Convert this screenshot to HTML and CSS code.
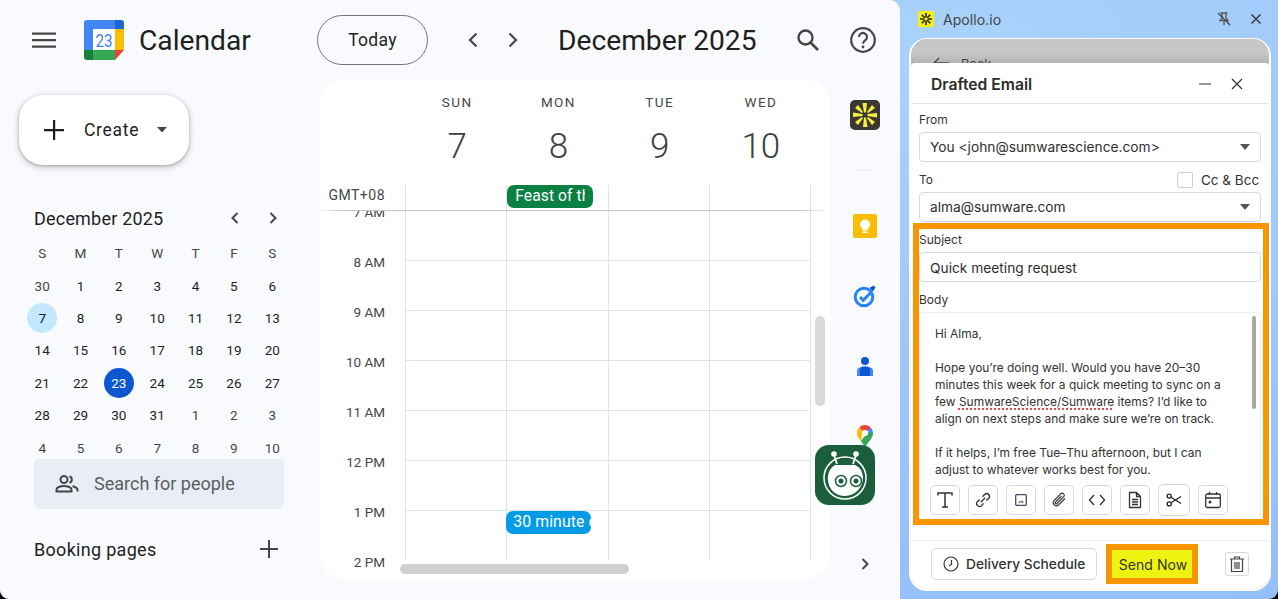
FILE: index.html
```html
<!DOCTYPE html>
<html lang="en">
<head>
<meta charset="utf-8">
<title>Calendar with Apollo.io</title>
<link rel="stylesheet" href="styles.css">
</head>
<body>
<div class="window">
  <div class="calendar">
    <header class="top">
      <div class="brand">
        <svg class="menu" width="24" height="24" viewBox="0 0 24 24"><path d="M0 4.500h24v2.200H0zM0 11h24v2.200H0zM0 17.500h24v2.200H0z" fill="#444746"/></svg>
        <svg class="logo" width="40" height="40" viewBox="0 0 40 40">
          <path d="M3 0h28v9H9v21H0V3a3 3 0 0 1 3-3z" fill="#4285f4"/>
          <path d="M31 0h6a3 3 0 0 1 3 3v6h-9z" fill="#1967d2"/>
          <path d="M31 9h9v21h-9z" fill="#fbbc04"/>
          <path d="M9 30h22v10H9z" fill="#34a853"/>
          <path d="M0 30h9v10H3a3 3 0 0 1-3-3z" fill="#188038"/>
          <path d="M31 30h9l-9 10z" fill="#ea4335"/>
          <rect x="9" y="9" width="22" height="21" fill="#fff"/>
          <text x="20" y="27" class="logo-num" textLength="17" lengthAdjust="spacingAndGlyphs">23</text>
        </svg>
        <span class="brand-name">Calendar</span>
      </div>
      <button class="today">Today</button>
      <svg class="nav-a" width="12" height="18" viewBox="0 0 12 18"><path d="M9.500 2.500 3 9l6.500 6.500" class="chev"/></svg>
      <svg class="nav-b" width="12" height="18" viewBox="0 0 12 18"><path d="M2.500 2.500 9 9l-6.500 6.500" class="chev"/></svg>
      <h1 class="month-title">December 2025</h1>
      <svg class="ic-search" width="26" height="26" viewBox="0 0 26 26"><circle cx="10.500" cy="10.500" r="7" fill="none" stroke="#444746" stroke-width="2.400"/><path d="m15.500 15.500 7.500 7.500" stroke="#444746" stroke-width="2.600"/></svg>
      <svg class="ic-help" width="28" height="28" viewBox="0 0 28 28"><circle cx="14" cy="14" r="11.800" fill="none" stroke="#444746" stroke-width="2.200"/><path d="M10 11a4 4 0 1 1 6.400 3.200c-1.500 1.100-2.400 1.800-2.400 3.500" fill="none" stroke="#444746" stroke-width="2.200"/><circle cx="14" cy="21" r="1.400" fill="#444746"/></svg>
    </header>
    <div class="main">
      <aside class="sidebar">
        <button class="create">
          <svg width="24" height="24" viewBox="0 0 24 24"><path d="M11 2h2.200v9H22v2.200h-8.800V22H11v-8.800H2V11h9z" fill="#1f1f1f"/></svg>
          <span class="create-label">Create</span>
          <svg width="12" height="6" viewBox="0 0 12 6"><path d="M1 0h10L6 5.500z" fill="#444746"/></svg>
        </button>
        <div class="mini-head">
          <span class="mini-title">December 2025</span>
          <svg class="mini-prev" width="10" height="14" viewBox="0 0 10 14"><path d="M7.500 2 2.500 7l5 5" class="chev-s"/></svg>
          <svg class="mini-next" width="10" height="14" viewBox="0 0 10 14"><path d="M2.500 2l5 5-5 5" class="chev-s"/></svg>
        </div>
        <div class="mini-grid">
          <span class="wd">S</span><span class="wd">M</span><span class="wd">T</span><span class="wd">W</span><span class="wd">T</span><span class="wd">F</span><span class="wd">S</span>
          <span class="dim">30</span><span>1</span><span>2</span><span>3</span><span>4</span><span>5</span><span>6</span>
          <span><b class="sel">7</b></span><span>8</span><span>9</span><span>10</span><span>11</span><span>12</span><span>13</span>
          <span>14</span><span>15</span><span>16</span><span>17</span><span>18</span><span>19</span><span>20</span>
          <span>21</span><span>22</span><span><b class="now">23</b></span><span>24</span><span>25</span><span>26</span><span>27</span>
          <span>28</span><span>29</span><span>30</span><span>31</span><span class="dim">1</span><span class="dim">2</span><span class="dim">3</span>
          <span class="dim">4</span><span class="dim">5</span><span class="dim">6</span><span class="dim">7</span><span class="dim">8</span><span class="dim">9</span><span class="dim">10</span>
        </div>
        <div class="people">
          <svg width="24" height="24" viewBox="0 0 24 24"><g fill="none" stroke="#444746" stroke-width="2"><circle cx="9" cy="7.500" r="3.500"/><path d="M1.500 19.500v-1.800c0-2.300 3.700-3.700 7.500-3.700s7.500 1.400 7.500 3.700v1.800z"/><path d="M14.500 4.200a3.500 3.500 0 0 1 0 6.600"/><path d="M17.500 14.300c2.800.7 5 1.700 5 3.400v1.800"/></g></svg>
          <span>Search for people</span>
        </div>
        <div class="booking">
          <span>Booking pages</span>
          <svg width="18" height="18" viewBox="0 0 18 18"><path d="M8 0h2v8h8v2h-8v8H8v-8H0V8h8z" fill="#444746"/></svg>
        </div>
      </aside>

      <section class="panel">
        <div class="day-head">
          <div></div>
          <div class="day"><span class="day-name">SUN</span><span class="day-num">7</span></div>
          <div class="day"><span class="day-name">MON</span><span class="day-num">8</span></div>
          <div class="day"><span class="day-name">TUE</span><span class="day-num">9</span></div>
          <div class="day"><span class="day-name">WED</span><span class="day-num">10</span></div>
        </div>
        <div class="allday">
          <div class="gmt">GMT+08</div>
          <div class="col"></div>
          <div class="col"><div class="chip green"><span>Feast of the Immaculate Conception</span></div></div>
          <div class="col"></div>
          <div class="col"></div>
          <div class="col"></div>
        </div>
        <div class="hours">
          <div class="hour"><div class="lbl">7 AM</div><div class="cell"></div><div class="cell"></div><div class="cell"></div><div class="cell"></div><div class="cell end"></div></div>
          <div class="hour"><div class="lbl">8 AM</div><div class="cell"></div><div class="cell"></div><div class="cell"></div><div class="cell"></div><div class="cell end"></div></div>
          <div class="hour"><div class="lbl">9 AM</div><div class="cell"></div><div class="cell"></div><div class="cell"></div><div class="cell"></div><div class="cell end"></div></div>
          <div class="hour"><div class="lbl">10 AM</div><div class="cell"></div><div class="cell"></div><div class="cell"></div><div class="cell"></div><div class="cell end"></div></div>
          <div class="hour"><div class="lbl">11 AM</div><div class="cell"></div><div class="cell"></div><div class="cell"></div><div class="cell"></div><div class="cell end"></div></div>
          <div class="hour"><div class="lbl">12 PM</div><div class="cell"></div><div class="cell"></div><div class="cell"></div><div class="cell"></div><div class="cell end"></div></div>
          <div class="hour"><div class="lbl">1 PM</div><div class="cell"></div><div class="cell"><div class="chip blue">30 minute call</div></div><div class="cell"></div><div class="cell"></div><div class="cell end"></div></div>
          <div class="hour last"><div class="lbl">2 PM</div></div>
        </div>
        <div class="vbar"></div>
        <div class="hbar"></div>
      </section>

      <nav class="rail">
        <svg class="rail-apollo" width="30" height="30" viewBox="0 0 30 30">
          <rect width="30" height="30" rx="5" fill="#3b3733"/>
          <path d="M12.500 3h4.500l-1 9.500h-2zM13 27h4.500l-1.500-9.500h-2zM3 12.500v4.500l9.500-1v-2zM27 13v4.500l-9.500-1.500v-2zM5 8l3-3 5 7-1 1zM25 22l-3 3-5-7 1-1zM22 5l3 3-7 5-1-1zM8 25l-3-3 7-5 1 1z" fill="#f5f03c"/>
        </svg>
        <div class="rail-rule"></div>
        <div class="slot">
          <svg width="24" height="24" viewBox="0 0 24 24"><rect width="24" height="24" rx="2.500" fill="#fbbc04"/><circle cx="12" cy="10.500" r="5" fill="#fff"/><rect x="9.500" y="14" width="5" height="2.500" fill="#fff"/><rect x="9.500" y="17.500" width="5" height="1.500" fill="#fff"/></svg>
        </div>
        <div class="slot">
          <svg width="24" height="24" viewBox="0 0 24 24"><circle cx="11" cy="13" r="8.800" fill="none" stroke="#2684fc" stroke-width="3"/><path d="m7 13 3.200 3.300 7.500-7.500" fill="none" stroke="#2684fc" stroke-width="3"/><path d="m16.500 4 4-2.500 2 2-2.500 4z" fill="#0b57d0"/></svg>
        </div>
        <div class="slot">
          <svg width="20" height="24" viewBox="0 0 20 24"><circle cx="10" cy="7" r="4" fill="#0b57d0"/><path d="M2 22v-5c0-3 3-4.500 8-4.500s8 1.500 8 4.500v5z" fill="#4285f4"/><path d="M5 22v-6c0-2 2-3.500 5-3.500s5 1.500 5 3.500v6z" fill="#0b57d0"/></svg>
        </div>
        <div class="slot">
          <svg width="20" height="24" viewBox="0 0 20 24"><path d="M18 9c0 5-4 8-8 14-1.500-2.500-3-4.300-4.200-6L15 6z" fill="#34a853"/><path d="M15.700 3.400A8 8 0 0 1 18 9l-3 0-3-3z" fill="#4285f4"/><path d="M2 9c0-2 .8-4 2.300-5.600L8 7l-2.200 10C3.500 14.500 2 12 2 9z" fill="#fbbc04"/><path d="M4.300 3.400a8 8 0 0 1 11.400 0L11 8 8 7z" fill="#ea4335"/><circle cx="10" cy="9" r="3" fill="#fff"/></svg>
        </div>
        <svg class="rail-more" width="10" height="14" viewBox="0 0 10 14"><path d="M2.500 2l5 5-5 5" fill="none" stroke="#444746" stroke-width="2"/></svg>
      </nav>
    </div>
    <div class="bot">
      <svg width="60" height="60" viewBox="0 0 60 60">
        <rect width="60" height="60" rx="14" fill="#1b5e3c"/>
        <circle cx="30" cy="33" r="21" fill="none" stroke="#fff" stroke-width="1.500"/>
        <path d="M22 19l-3-9M38 19l3-9" stroke="#fff" stroke-width="1.800"/>
        <circle cx="19" cy="9" r="2.800" fill="#fff"/><circle cx="41" cy="9" r="2.800" fill="#fff"/>
        <path d="M20 20h20c5 2 8 7 8 13 0 9-8 18-18 18s-16-7-17-15c-1-7 2-13 7-16z" fill="#fff"/>
        <circle cx="26" cy="36" r="5.500" fill="none" stroke="#1b5e3c" stroke-width="1.500"/><circle cx="26" cy="36" r="2.500" fill="#1b5e3c"/>
        <circle cx="41" cy="36" r="5.500" fill="none" stroke="#1b5e3c" stroke-width="1.500"/><circle cx="41" cy="36" r="2.500" fill="#1b5e3c"/>
      </svg>
    </div>
  </div>

  <div class="apollo">
    <div class="ap-title">
      <svg width="16" height="16" viewBox="0 0 16 16"><rect width="16" height="16" fill="#f4ee1a"/><path d="M8 2v4.500M8 9.500V14M2 8h4.500M9.500 8H14M3.800 3.800l3 3M9.200 9.200l3 3M12.200 3.800l-3 3M6.800 9.200l-3 3" stroke="#26241c" stroke-width="1.600"/></svg>
      <span class="ap-name">Apollo.io</span>
      <svg class="ap-pin" width="14" height="14" viewBox="0 0 14 14"><path d="M3.500 1h7M5 1v5L3 8.500h8L9 6V1M7 8.500V13" fill="none" stroke="#555" stroke-width="1.300"/><path d="m1 1 12 12" stroke="#444" stroke-width="1.300"/></svg>
      <svg class="ap-x" width="12" height="12" viewBox="0 0 12 12"><path d="m1.500 1.500 9 9m0-9-9 9" stroke="#333" stroke-width="1.400"/></svg>
    </div>
    <div class="frame">
      <div class="backdrop">
        <svg width="16" height="12" viewBox="0 0 16 12"><path d="M6 1 1 6l5 5M1 6h15" fill="none" stroke="#444" stroke-width="1.300"/></svg>
        <span>Back</span>
      </div>
      <div class="modal">
        <div class="modal-head">
          <span class="modal-title">Drafted Email</span>
          <svg class="m-min" width="14" height="14" viewBox="0 0 14 14"><path d="M1 7h12" stroke="#777" stroke-width="1.400"/></svg>
          <svg class="m-x" width="12" height="12" viewBox="0 0 12 12"><path d="m1 1 10 10m0-10L1 11" stroke="#333" stroke-width="1.200"/></svg>
        </div>
        <div class="fields">
          <label class="f-label">From</label>
          <div class="field select first"><span>You &lt;john@sumwarescience.com&gt;</span><i class="caret"></i></div>
          <div class="to-row">
            <label class="f-label to">To</label>
            <span class="check"></span>
            <span class="ccbcc">Cc &amp; Bcc</span>
          </div>
          <div class="field select"><span>alma@sumware.com</span><i class="caret"></i></div>
        </div>
        <div class="mark-box">
          <label class="f-label">Subject</label>
          <div class="field subject"><span>Quick meeting request</span></div>
          <label class="f-label body-l">Body</label>
          <div class="body-box">
            <div class="body-text">
              <p>Hi Alma,</p>
              <p>Hope you’re doing well. Would you have 20–30<br>minutes this week for a quick meeting to sync on a<br>few <u>SumwareScience/Sumware</u> items? I’d like to<br>align on next steps and make sure we’re on track.</p>
              <p>If it helps, I’m free Tue–Thu afternoon, but I can<br>adjust to whatever works best for you.</p>
            </div>
            <div class="body-scroll"></div>
            <div class="tools">
              <span class="tool"><svg width="20" height="20" viewBox="0 0 20 20"><path d="M3 5.500V3h14v2.500M10 3v14M7 17h6" fill="none" stroke="#333" stroke-width="1.500"/></svg></span>
              <span class="tool"><svg width="20" height="20" viewBox="0 0 18 18"><path d="M7 11l4-4M6 8.500l-2.300 2.300a2.600 2.600 0 0 0 3.600 3.600L9.500 12M8.500 6l2.300-2.300a2.600 2.600 0 0 1 3.600 3.600L12 9.500" fill="none" stroke="#333" stroke-width="1.200"/></svg></span>
              <span class="tool"><svg width="14" height="14" viewBox="0 0 14 14"><rect x="1.700" y="1.700" width="10.600" height="10.600" rx="1" fill="none" stroke="#3c4a6b" stroke-width="1.300"/><path d="M4 9.500l1.500-1.500 1 1 1.500-1.500L10 9.500z" fill="#3c4a6b"/></svg></span>
              <span class="tool"><svg width="20" height="20" viewBox="0 0 20 20"><path d="M16 8.500l-6.500 6.500a3.200 3.200 0 0 1-4.500-4.500l7-7a2.200 2.200 0 0 1 3 3l-7 7a1 1 0 0 1-1.500-1.500l6-6" fill="none" stroke="#333" stroke-width="1.100"/></svg></span>
              <span class="tool"><svg width="18" height="14" viewBox="0 0 18 14"><path d="M6 2 1.500 7 6 12M12 2l4.500 5L12 12" fill="none" stroke="#333" stroke-width="1.400"/></svg></span>
              <span class="tool"><svg width="14" height="18" viewBox="0 0 14 18"><path d="M1.500 1.500h7l4 4v11h-11zM8.500 1.500v4h4M4 8.500h6M4 11h6M4 13.500h6" fill="none" stroke="#333" stroke-width="1.300"/></svg></span>
              <span class="tool big"><svg width="16" height="14" viewBox="0 0 18 16"><circle cx="3.500" cy="3.500" r="2.300" fill="none" stroke="#222" stroke-width="1.500"/><circle cx="3.500" cy="12.500" r="2.300" fill="none" stroke="#222" stroke-width="1.500"/><path d="M5.500 4.800 17 12M5.500 11.200 17 4" stroke="#222" stroke-width="1.500"/></svg></span>
              <span class="tool"><svg width="18" height="18" viewBox="0 0 18 18"><rect x="1.700" y="3" width="14.600" height="13.500" rx="1.500" fill="none" stroke="#333" stroke-width="1.300"/><path d="M1.700 7h14.600M5.500 1v3M12.500 1v3" stroke="#333" stroke-width="1.300"/><circle cx="6" cy="11" r="1.500" fill="#333"/></svg></span>
            </div>
          </div>
        </div>
        <div class="modal-foot">
          <button class="delivery">
            <svg width="16" height="16" viewBox="0 0 16 16"><circle cx="8" cy="8" r="7" fill="none" stroke="#333" stroke-width="1.200"/><path d="M8.500 4v4.500L6 10" fill="none" stroke="#333" stroke-width="1.200"/></svg>
            <span>Delivery Schedule</span>
          </button>
          <button class="send">Send Now</button>
          <button class="trash"><svg width="16" height="18" viewBox="0 0 16 18"><path d="M1 4h14M5.500 4V2h5v2M2.500 4v12.500h11V4M6 7v7M8 7v7M10 7v7" fill="none" stroke="#444" stroke-width="1.200"/></svg></button>
        </div>
      </div>
    </div>
  </div>
</div>
</body>
</html>
```
FILE: styles.css
```css
* { box-sizing: border-box; }
html, body { margin: 0; height: 599px; overflow: hidden; background: #000; }
button { font: inherit; cursor: default; background: none; padding: 0; }
svg { display: block; flex: none; }
p { margin: 0 0 17px; }
h1 { margin: 0; }

.window {
  display: flex;
  width: 1278px;
  height: 599px;
  overflow: hidden;
  border-radius: 0 0 9px 9px;
  background: radial-gradient(ellipse at 75% 10%, #a9d2fc 0%, #95c0f8 70%, #8fb9f2 100%);
}

/* ---------- Calendar ---------- */
.calendar {
  position: relative;
  display: flex;
  flex-direction: column;
  width: 900px;
  background: #f8fafd;
  border-top-right-radius: 11px;
  font-family: Roboto, "Noto Sans", sans-serif;
  color: #1f1f1f;
}
.top { display: flex; align-items: center; height: 80px; flex: none; }
.brand { display: flex; align-items: center; width: 317px; padding-left: 32px; }
.logo { margin-left: 28px; }
.logo-num { font: 400 19px Roboto, sans-serif; fill: #4285f4; text-anchor: middle; }
.brand-name { margin-left: 15px; font-size: 28.200px; color: #1f1f1f; }
.today {
  width: 111px; height: 50px;
  border: 1px solid #747775; border-radius: 25px;
  font-size: 17.500px; font-weight: 400; letter-spacing: .3px; color: #1f1f1f;
}
.chev { fill: none; stroke: #444746; stroke-width: 2.200; }
.chev-s { fill: none; stroke: #444746; stroke-width: 2; }
.nav-a { margin-left: 39px; }
.nav-b { margin-left: 28px; }
.month-title { margin-left: 39px; font-size: 28.200px; font-weight: 400; color: #1f1f1f; width: 199px; white-space: nowrap; }
.ic-search { margin-left: 38px; }
.ic-help { margin-left: 28px; }

.main { display: flex; flex: 1; min-height: 0; }

.sidebar { width: 320px; flex: none; display: flex; flex-direction: column; }
.create {
  display: flex; align-items: center;
  width: 170px; height: 70px;
  margin: 15px 0 0 19px; padding-left: 23px;
  border: 0; border-radius: 24px; background: #fff;
  box-shadow: 0 1px 3px rgba(60,64,67,.35), 0 2px 6px 1px rgba(60,64,67,.2);
}
.create-label { margin: 0 17px 0 18px; font-size: 17.500px; font-weight: 400; letter-spacing: .7px; color: #1f1f1f; }
.mini-head { display: flex; align-items: center; height: 22px; margin: 42px 0 0 34px; }
.mini-title { font-size: 18px; font-weight: 400; letter-spacing: .2px; width: 196px; color: #1f1f1f; white-space: nowrap; }
.mini-next { margin-left: 28px; }
.mini-grid {
  display: grid;
  grid-template-columns: repeat(7, 38.350px);
  grid-auto-rows: 32.400px;
  width: 270px;
  margin: 8px 0 0 23px;
  font-size: 13.500px;
  color: #1f1f1f;
}
.mini-grid span { display: flex; align-items: center; justify-content: center; }
.mini-grid .wd, .mini-grid .dim { color: #444746; }
.mini-grid b { display: flex; align-items: center; justify-content: center; width: 30px; height: 30px; border-radius: 50%; font-weight: 400; }
.sel { background: #c2e7ff; color: #001d35; }
.now { background: #0b57d0; color: #fff; }
.people {
  position: relative;
  display: flex; align-items: center; gap: 15px;
  width: 250px; height: 50px;
  margin: -5px 0 0 34px; padding-left: 21px;
  background: #e9eef6; border-radius: 4px 4px 6px 6px;
  font-size: 18px; color: #5a5e60;
}
.booking {
  display: flex; align-items: center; justify-content: space-between;
  width: 244px; margin: 30px 0 0 34px;
  font-size: 18px; font-weight: 400; letter-spacing: .3px; color: #1f1f1f;
}

.panel {
  position: relative;
  display: flex; flex-direction: column;
  width: 510px; height: 499px; flex: none;
  background: #fff; border-radius: 24px;
  overflow: hidden;
}
.day-head { display: grid; grid-template-columns: 85px repeat(4, 101.250px); height: 105px; flex: none; }
.day { display: flex; flex-direction: column; align-items: center; padding: 14px 0 0 3px; }
.day-name { font-size: 13.500px; font-weight: 400; letter-spacing: 1.400px; color: #444746; line-height: 16px; }
.day-num { margin-top: 15px; font-size: 35px; line-height: 44px; font-weight: 300; color: #3c4043; }
.allday {
  display: grid;
  grid-template-columns: 85px repeat(4, 101.250px) 20px;
  height: 26px; flex: none;
  border-bottom: 1px solid #c1c5cb;
  border-image: linear-gradient(90deg, #fff, #c1c5cb 4%, #c1c5cb 94%, #fff) 1;
}
.gmt { padding: 1px 20px 0 0; text-align: right; font-size: 14px; letter-spacing: .5px; line-height: 18px; color: #444746; white-space: nowrap; }
.col { border-left: 1px solid #dde3ea; }
.chip {
  width: 86px; height: 23px;
  padding: 0 8px;
  border-radius: 7px;
  color: #fff; font-size: 15.600px; font-weight: 400; letter-spacing: .1px; line-height: 22px;
  white-space: nowrap; overflow: hidden;
}
.chip span { display: block; overflow: hidden; }
.green { background: #0b8043; }
.blue { background: #039be5; width: 85px; padding: 0 0 0 7px; margin-left: -1px; position: relative; font-size: 15.800px; }
.hours { flex: 1; overflow: hidden; }
.hour {
  display: grid;
  grid-template-columns: 85px repeat(4, 101.250px) 20px;
  height: 50px;
}
.hour:first-child { margin-top: -1px; }
.lbl { margin-top: -6px; padding-right: 20px; text-align: right; font-size: 13.500px; line-height: 16px; color: #444746; white-space: nowrap; }
.cell { border-left: 1px solid #dde3ea; border-top: 1px solid #dde3ea; }
.cell.end { border-top-color: transparent; }
.vbar { position: absolute; left: 495px; top: 236px; width: 10px; height: 90px; border-radius: 5px; background: #d9d9d9; }
.hbar { position: absolute; left: 80px; top: 484px; width: 229px; height: 10px; border-radius: 5px; background: #d0d0d0; }

.rail { flex: 1; display: flex; flex-direction: column; align-items: center; padding-top: 20px; }
.rail-rule { width: 20px; height: 1px; margin: 40px 0 20px; background: #e8ebf0; }
.slot { height: 70px; display: flex; align-items: center; justify-content: center; }
.rail-more { margin-top: auto; margin-bottom: 28px; }
.bot { position: absolute; left: 815px; top: 445px; }

/* ---------- Apollo ---------- */
.apollo {
  flex: 1; min-width: 0;
  display: flex; flex-direction: column;
  font-family: Inter, "Noto Sans", sans-serif;
  color: #222;
}
.ap-title { display: flex; align-items: center; height: 38px; flex: none; padding-left: 18px; }
.ap-name { margin-left: 9px; width: 274px; font-size: 14px; letter-spacing: .05px; color: #444; }
.ap-x { margin-left: 19px; }
.frame {
  flex: 1; min-height: 0;
  display: flex; flex-direction: column;
  margin: 0 7px 8px 9px;
  border: 2px solid #fdfdfe; border-top-width: 1px;
  border-radius: 18px;
  background: #c4c4c4;
  overflow: hidden;
}
.backdrop {
  display: flex; align-items: flex-start; gap: 12px;
  height: 24px; flex: none;
  padding: 18px 0 0 22px;
  overflow: hidden;
  font-size: 13px; line-height: 14px; color: #444;
  background: linear-gradient(#c6c6c6 60%, #b4b4b4);
}
.modal { flex: 1; min-height: 0; display: flex; flex-direction: column; background: #fff; border-radius: 4px 4px 0 0; }
.modal-head {
  display: flex; align-items: center;
  height: 41px; flex: none;
  padding: 2px 0 0 20px;
  border-bottom: 1px solid #e6e6e6;
}
.modal-title { width: 267px; font-size: 15.700px; font-weight: 600; color: #2b2b2b; }
.m-x { margin-left: 19px; }
.fields { padding: 9px 8px 0; flex: none; }
.f-label { display: block; height: 14px; font-size: 12px; line-height: 14px; color: #333; }
.field {
  display: flex; align-items: center; justify-content: space-between;
  height: 30px; margin-top: 6px; padding: 0 10px;
  border: 1px solid #d9d9d9; border-radius: 4px;
  font-size: 13.750px; color: #2e2e2e;
}
.field.first { margin-top: 5px; }
.field.subject { padding-top: 1px; }
.caret { width: 0; height: 0; border: 5px solid transparent; border-top: 6px solid #555; border-bottom: 0; }
.to-row { display: flex; align-items: center; height: 16px; margin-top: 10px; margin-bottom: -2px; }
.to { width: 258px; }
.check { width: 16px; height: 16px; border: 1px solid #cfcfcf; border-radius: 2px; flex: none; }
.ccbcc { margin-left: 8px; font-size: 13.500px; white-space: nowrap; color: #333; }
.mark-box {
  flex: none;
  width: 356px; height: 302px;
  margin: 1px 0 0 2px; padding: 3px 2px 0 0;
  border: 6px solid #f99500;
  display: flex; flex-direction: column;
}
.mark-box .f-label { line-height: 16px; }
.body-l { margin-top: 10px; }
.body-box {
  position: relative;
  flex: 1; min-height: 0;
  margin-top: 6px;
  border: 1px solid #eee; border-bottom: 0; border-radius: 4px 4px 0 0;
  overflow: hidden;
}
.body-text {
  height: 164px; overflow: hidden;
  padding: 12px 0 0 15px;
  font-size: 11.950px; line-height: 17px; color: #333;
}
.body-text u { text-decoration: underline dotted #e5484d 1.500px; text-underline-offset: 2px; }
.body-scroll { position: absolute; right: 4px; top: 3px; width: 4px; height: 93px; border-radius: 2px; background: #aaa7a7; }
.tools { display: flex; gap: 8px; align-items: center; padding: 7px 0 0 10px; }
.tool {
  display: flex; align-items: center; justify-content: center;
  width: 30px; height: 30px; flex: none;
  border: 1px solid #d8d8d8; border-radius: 5px;
}
.tool.big { width: 32px; height: 32px; }
.modal-foot {
  flex: 1; display: flex; align-items: center;
  margin-top: 15px; padding: 0 0 2px 20px;
  border-top: 1px solid #ececec;
}
.delivery {
  display: flex; align-items: center; gap: 7px;
  width: 166px; height: 32px; padding-left: 11px;
  border: 1px solid #d9d9d9; border-radius: 5px;
  font-size: 13.750px; font-weight: 500; color: #333;
}
.send {
  width: 92px; height: 40px; margin-left: 9px; padding-left: 2px;
  border: 6px solid #f99500; background: #eef30f;
  font-size: 14px; font-weight: 400; letter-spacing: .05px; color: #333;
}
.trash {
  display: flex; align-items: center; justify-content: center;
  width: 24px; height: 24px; margin-left: 27px;
  border: 1px solid #d9d9d9; border-radius: 3px;
}
```
